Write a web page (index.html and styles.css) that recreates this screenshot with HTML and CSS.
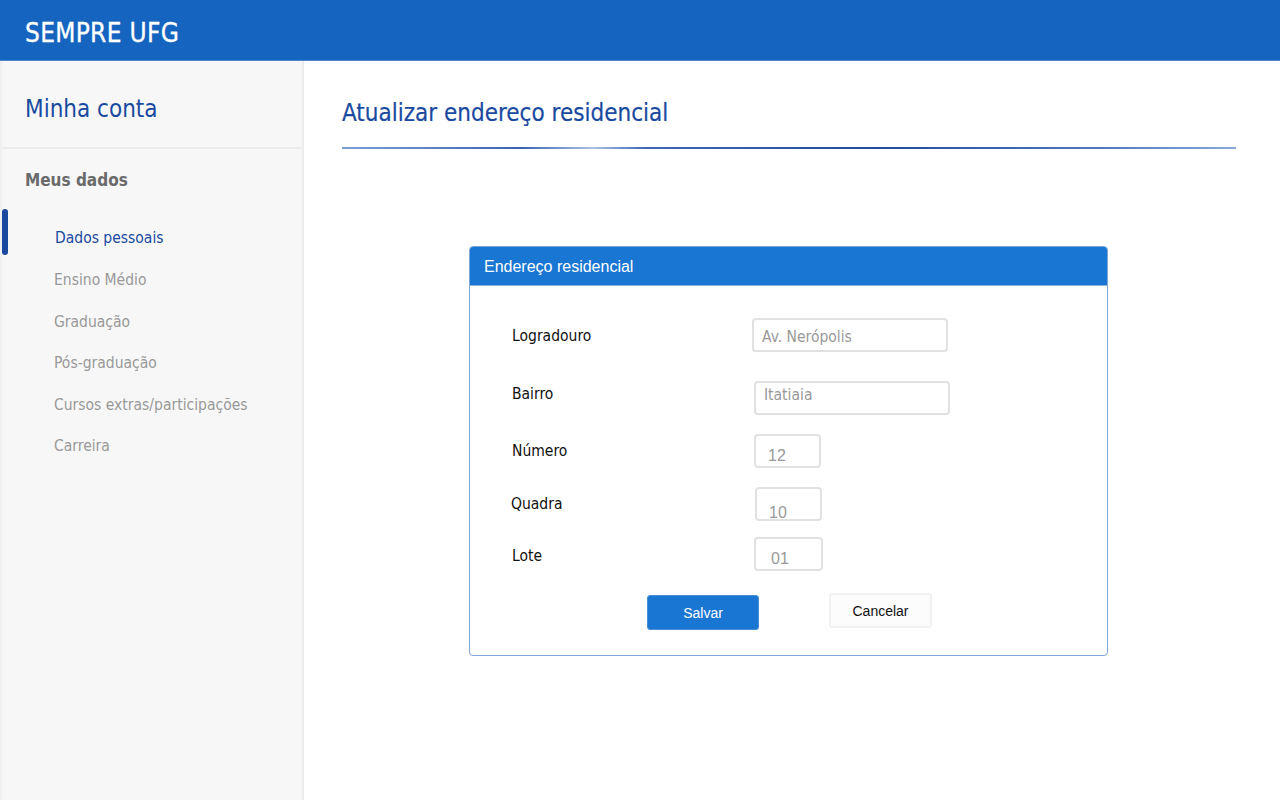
FILE: index.html
```html
<!DOCTYPE html>
<html lang="pt-BR">
<head>
<meta charset="utf-8">
<title>SEMPRE UFG</title>
<link rel="stylesheet" href="styles.css">
</head>
<body>
<header class="topbar">
  <div class="brand">SEMPRE UFG</div>
</header>
<div class="layout">
  <aside class="sidebar">
    <div class="side-head">Minha conta</div>
    <div class="side-section">
      <div class="section-title">Meus dados</div>
      <nav class="side-nav">
        <a class="nav-item active">Dados pessoais</a>
        <a class="nav-item">Ensino Médio</a>
        <a class="nav-item">Graduação</a>
        <a class="nav-item">Pós-graduação</a>
        <a class="nav-item">Cursos extras/participações</a>
        <a class="nav-item">Carreira</a>
      </nav>
    </div>
  </aside>
  <main class="content">
    <h1 class="page-title">Atualizar endereço residencial</h1>
    <div class="title-rule"></div>
    <section class="card">
      <div class="card-head">Endereço residencial</div>
      <div class="card-body">
        <div class="field f1"><span class="label">Logradouro</span><span class="input wide">Av. Nerópolis</span></div>
        <div class="field f2"><span class="label">Bairro</span><span class="input wide top">Itatiaia</span></div>
        <div class="field f3"><span class="label">Número</span><span class="input small low">12</span></div>
        <div class="field f4"><span class="label">Quadra</span><span class="input small lower">10</span></div>
        <div class="field f5"><span class="label">Lote</span><span class="input small low">01</span></div>
        <div class="actions">
          <button class="btn primary">Salvar</button>
          <button class="btn secondary">Cancelar</button>
        </div>
      </div>
    </section>
  </main>
</div>
</body>
</html>
```
FILE: styles.css
```css
* { box-sizing: border-box; }
html, body { margin: 0; padding: 0; }
body {
  width: 1280px;
  height: 800px;
  overflow: hidden;
  background: #fff;
  font-family: "DejaVu Sans Condensed", "DejaVu Sans", sans-serif;
}
.topbar {
  height: 61px;
  background: #1565c0;
  border-bottom: 1px solid #4f86c6;
  display: flex;
  align-items: center;
  padding-left: 25px;
}
.brand {
  color: #fff;
  font-size: 26px;
  letter-spacing: 0.3px;
  margin-top: 5px;
  -webkit-text-stroke: 0.3px #fff;
}
.layout {
  display: flex;
  height: 739px;
}
.sidebar {
  width: 304px;
  background: #f7f7f7;
  border-right: 2px solid #ececec;
  border-left: 2px solid #f0f0f0;
  flex-shrink: 0;
}
.side-head {
  height: 88px;
  border-bottom: 2px solid #ebebeb;
  color: #1a4aa0;
  font-size: 24px;
  padding: 34px 0 0 23px;
}
.section-title {
  color: #6a6a6a;
  font-size: 17px;
  font-weight: bold;
  padding: 21px 0 0 23px;
}
.side-nav {
  display: flex;
  flex-direction: column;
  margin-top: 20px;
}
.nav-item {
  display: block;
  height: 41.5px;
  line-height: 44px;
  padding-left: 52px;
  color: #999;
  font-size: 15.5px;
  position: relative;
}
.nav-item.active {
  color: #1a4aa0;
  height: 48px;
  line-height: 56px;
  padding-left: 53px;
}
.nav-item.active::before {
  content: "";
  position: absolute;
  left: 0;
  top: -1px;
  width: 6px;
  height: 46px;
  border-radius: 3px;
  background: #1a4aa0;
}
.content {
  flex: 1;
  padding: 0 0 0 38px;
}
.page-title {
  margin: 0;
  padding-top: 38px;
  font-weight: normal;
  color: #1a4aa0;
  font-size: 24px;
  height: 86px;
  -webkit-text-stroke: 0.2px #1a4aa0;
}
.title-rule {
  width: 894px;
  height: 2px;
  background: linear-gradient(90deg, #7c9fd4 0%, #3a64b0 20%, #a9c0e4 28%, #3e68b4 34%, #1f4c9c 60%, #4f79bf 85%, #8aa8d8 100%);
}
.card {
  width: 639px;
  margin: 97px 0 0 127px;
  border: 1px solid #7fa7d6;
  border-radius: 4px;
  overflow: hidden;
  height: 410px;
}
.card-head {
  height: 39px;
  background: #1976d2;
  color: #fff;
  font-family: "Liberation Sans", Arial, sans-serif;
  font-size: 16px;
  padding: 11px 0 0 14px;
  border-bottom: 1px solid #8fb1dc;
}
.card-body {
  padding: 32px 0 0 42px;
}
.field {
  display: flex;
  align-items: flex-start;
}
.label {
  width: 240px;
  color: #111;
  font-size: 15.5px;
  padding-top: 9px;
}
.input {
  display: block;
  border: 2px solid #e1e1e1;
  border-radius: 4px;
  height: 34px;
  color: #999;
  font-size: 15.5px;
  padding: 10px 0 0 8px;
  line-height: 1;
}
.input.wide { width: 196px; }
.input.small {
  width: 67px;
  padding-left: 12px;
  font-family: "Liberation Sans", Arial, sans-serif;
  font-size: 16px;
}
.input.top { padding-top: 5px; }
.input.low { padding-top: 12px; }
.input.lower { padding-top: 16px; }
.f1 { height: 63px; }
.f2 { height: 53px; }
.f2 .label { padding-top: 4px; }
.f2 .input { margin-left: 2px; }
.f3 { height: 53px; }
.f3 .label { padding-top: 8px; }
.f3 .input { margin-left: 2px; }
.f4 { height: 50px; }
.f4 .label { padding-top: 8px; margin-left: -1px; width: 241px; }
.f4 .input { margin-left: 3px; }
.f5 { height: 57px; }
.f5 .label { padding-top: 10px; }
.f5 .input { margin-left: 2px; width: 69px; padding-left: 15px; }
.actions {
  display: flex;
  align-items: flex-start;
  padding-left: 135px;
  gap: 70px;
}
.btn {
  font-family: "Liberation Sans", Arial, sans-serif;
  font-size: 14px;
  border-radius: 3px;
  cursor: pointer;
}
.btn.primary {
  width: 112px;
  height: 35px;
  background: #1976d2;
  color: #fff;
  border: 1px solid #4a8fd6;
  margin-top: 1px;
}
.btn.secondary {
  width: 103px;
  height: 35px;
  background: #fcfcfc;
  color: #111;
  border: 2px solid #f1f1f1;
  margin-top: -1px;
}
```
